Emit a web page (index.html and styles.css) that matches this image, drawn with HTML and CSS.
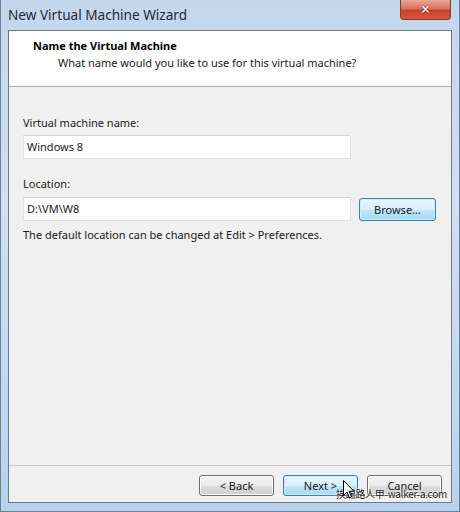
FILE: index.html
```html
<!DOCTYPE html>
<html>
<head>
<meta charset="utf-8">
<link rel="stylesheet" href="styles.css">
</head>
<body>
<div class="frame">
  <div class="titlebar">
    <span class="title">New Virtual Machine Wizard</span>
    <div class="close"><span class="x">✕</span></div>
  </div>
  <div class="client">
    <div class="header">
      <div class="h-title">Name the Virtual Machine</div>
      <div class="h-sub">What name would you like to use for this virtual machine?</div>
    </div>
    <div class="body">
      <div class="label lbl-name">Virtual machine name:</div>
      <div class="row">
        <div class="input">Windows 8</div>
      </div>
      <div class="label lbl-loc">Location:</div>
      <div class="row">
        <div class="input">D:\VM\W8</div>
        <div class="btn browse">Browse...</div>
      </div>
      <div class="help">The default location can be changed at Edit &gt; Preferences.</div>
    </div>
    <div class="footer">
      <div class="btn">&lt; Back</div>
      <div class="btn next">Next &gt;</div>
      <div class="btn">Cancel</div>
    </div>
  </div>
  <div class="watermark">挨踢路人甲-walker-a.com</div>
  <svg class="cursor" width="12" height="19" viewBox="0 0 12 19">
    <path d="M0.5 0.5 L0.5 15.5 L4 12 L6.5 18 L8.5 17 L6 11.2 L11 11.2 Z" fill="#fff" stroke="#000" stroke-width="1"/>
  </svg>
</div>
</body>
</html>
```
FILE: styles.css
```css
html, body {
  margin: 0;
  padding: 0;
}
body {
  width: 460px;
  height: 512px;
  overflow: hidden;
  font-family: "Noto Sans", "Open Sans", sans-serif;
}
.frame {
  position: relative;
  width: 460px;
  height: 512px;
  background: linear-gradient(180deg, #c3d6ec 0%, #cfe0f2 40%, #b8d3ee 100%);
  display: flex;
  flex-direction: column;
  box-sizing: border-box;
  border: 1px solid #6e8194;
  border-top: none;
  padding: 0 7px 8px 7px;
}
.titlebar {
  height: 30px;
  position: relative;
  display: flex;
  align-items: flex-start;
}
.title {
  font-family: "Noto Sans", sans-serif;
  font-size: 13.6px;
  color: #1c2a3a;
  margin-top: 5px;
}
.close {
  position: absolute;
  right: 1px;
  top: 0;
  width: 51px;
  height: 20px;
  box-sizing: border-box;
  border: 1px solid #8a3a2c;
  border-top: none;
  border-radius: 0 0 4px 4px;
  background: linear-gradient(180deg, #e8a896 0%, #d9725e 45%, #c7402a 55%, #d45a3c 100%);
  display: flex;
  align-items: center;
  justify-content: center;
}
.x {
  color: #fff;
  font-family: "DejaVu Sans", sans-serif;
  font-weight: bold;
  font-size: 13px;
  line-height: 1;
  text-shadow: 0 0 1px #5a1a10, 0 0 1px #5a1a10;
}
.client {
  flex: 1;
  border: 1px solid #6c7b8b;
  background: #f0f0f0;
  display: flex;
  flex-direction: column;
  font-size: 11px;
  color: #1a1a1a;
}
.header {
  height: 56px;
  background: #fff;
  border-bottom: 1px solid #a8a8a8;
  box-sizing: border-box;
  padding: 7px 0 0 24px;
}
.h-title {
  font-weight: bold;
  font-size: 11px;
  color: #000;
  line-height: 16px;
}
.h-sub {
  margin-left: 25px;
  margin-top: 1px;
  line-height: 16px;
}
.body {
  flex: 1;
  padding: 28px 0 0 14px;
}
.label {
  line-height: 16px;
}
.lbl-name {
  margin-bottom: 4px;
}
.lbl-loc {
  margin-top: 17px;
  margin-bottom: 5px;
}
.row {
  display: flex;
  align-items: center;
  gap: 8px;
}
.input {
  width: 328px;
  height: 24px;
  box-sizing: border-box;
  background: #fff;
  border: 1px solid #e2e2e2;
  border-top-color: #d6d6d6;
  padding: 0 3px;
  line-height: 22px;
}
.help {
  margin-top: 6px;
  line-height: 16px;
}
.btn {
  width: 75px;
  height: 21px;
  box-sizing: border-box;
  border: 1px solid #707070;
  border-radius: 3px;
  background: linear-gradient(180deg, #f2f2f2 0%, #ebebeb 50%, #dddddd 51%, #cfcfcf 100%);
  box-shadow: inset 0 0 0 1px #fcfcfc;
  text-align: center;
  line-height: 19px;
  color: #1a1a1a;
}
.browse {
  width: 77px;
  height: 23px;
  line-height: 21px;
  border-color: #3c7fb1;
  background: linear-gradient(180deg, #eaf6fd 0%, #d9f0fc 50%, #bee6fd 51%, #a7d9f5 100%);
  box-shadow: inset 0 0 0 1px #c8ecfc;
}
.next {
  border-color: #3c7fb1;
  background: linear-gradient(180deg, #eaf6fd 0%, #d9f0fc 50%, #bee6fd 51%, #a7d9f5 100%);
  box-shadow: inset 0 0 0 1px #c8ecfc;
}
.footer {
  height: 37px;
  border-top: 1px solid #c8c8c8;
  box-sizing: border-box;
  display: flex;
  justify-content: flex-end;
  align-items: flex-start;
  gap: 9px;
  padding: 9px 9px 0 0;
}
.watermark {
  position: absolute;
  left: 335px;
  top: 487px;
  font-family: "Noto Sans CJK TC", "Noto Sans", sans-serif;
  font-size: 10px;
  color: #1a1a1a;
  letter-spacing: -0.3px;
  line-height: 13px;
  text-shadow: 0 0 2px #fff, 0 0 2px #fff;
}
.cursor {
  position: absolute;
  left: 342px;
  top: 480px;
}
```
